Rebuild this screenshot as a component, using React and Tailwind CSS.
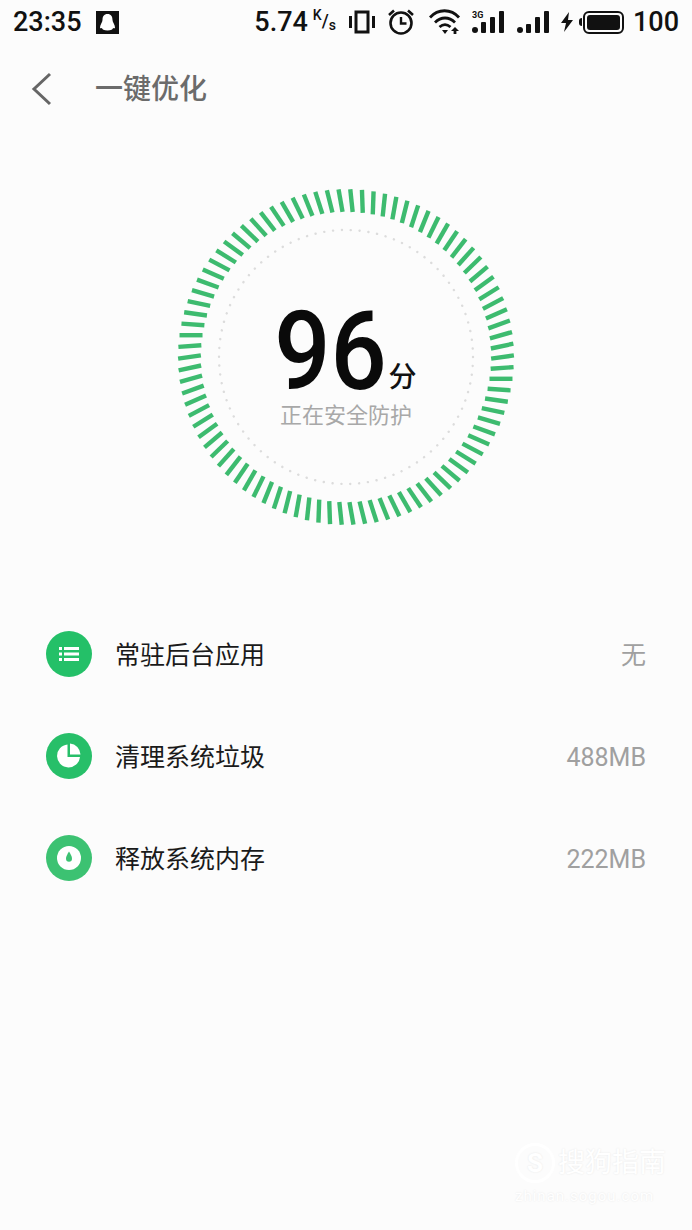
import React from 'react';

const CJK = { fontFamily: 'Roboto, "Noto Sans CJK SC", sans-serif' };

function range(n) {
  return Array.from({ length: n }, (_, i) => i);
}

function Ring() {
  const count = 90;
  return (
    <svg width="340" height="340" viewBox="-170 -170 340 340" className="block">
      <circle r="127" fill="none" stroke="#dcdcdc" strokeWidth="2.400" strokeLinecap="round" strokeDasharray="0.1 8.767" />
      {/* ticks lean 8deg off the radius */}
      {range(count).map((i) => (
        <line
          key={i}
          x1="0"
          y1="-11.500"
          x2="0"
          y2="11.500"
          stroke="#3dbb6f"
          strokeWidth="4.400"
          transform={`rotate(${i * 4 + 2}) translate(0 -156.500) rotate(-8)`}
        />
      ))}
    </svg>
  );
}

function StatusIcons() {
  return (
    <>
      <svg width="26" height="24" viewBox="0 0 26 24" className="ml-[13px]">
        <path d="M7 2h12v20H7z" fill="none" stroke="#111" strokeWidth="3" />
        <path d="M1.500 6v12M24.500 6v12" stroke="#111" strokeWidth="3" />
      </svg>
      <svg width="28" height="28" viewBox="0 0 28 28" className="ml-[12px]">
        <circle cx="14" cy="15" r="10.500" fill="none" stroke="#111" strokeWidth="2.600" />
        <path d="M14 9v6.500h5.500" fill="none" stroke="#111" strokeWidth="2.400" />
        <path d="M2 7l5-4.500M26 7l-5-4.500" stroke="#111" strokeWidth="2.600" />
      </svg>
      <svg width="32" height="26" viewBox="0 0 32 26" className="ml-[14px]">
        <path d="M1 8.500C9-.5 22-.5 30 8.500" fill="none" stroke="#111" strokeWidth="2.800" />
        <path d="M6 13.500c6-6 14-6 20 0" fill="none" stroke="#111" strokeWidth="2.800" />
        <path d="M10.500 18c3.500-3 7.500-3 11 0" fill="none" stroke="#111" strokeWidth="2.800" />
        <path d="M13 21h6l-3 4z" fill="#111" />
        <path d="M26 18l4 4h-2.600v3h-2.800v-3H22z" fill="#111" />
      </svg>
      <svg width="32" height="24" viewBox="0 0 32 24" className="ml-[11px]">
        <text x="0" y="8" fontSize="9" fontWeight="700" fontFamily="Roboto, sans-serif" fill="#111">3G</text>
        <circle cx="3" cy="20" r="3" fill="#111" />
        <rect x="9" y="12" width="5" height="11" rx="1" fill="#111" />
        <rect x="18" y="7" width="5" height="16" rx="1" fill="#111" />
        <rect x="27" y="1" width="5" height="22" rx="1" fill="#111" />
      </svg>
      <svg width="32" height="24" viewBox="0 0 32 24" className="ml-[13px]">
        <circle cx="3" cy="20" r="3" fill="#111" />
        <rect x="9" y="14" width="5" height="9" rx="1" fill="#111" />
        <rect x="18" y="7" width="5" height="16" rx="1" fill="#111" />
        <rect x="27" y="1" width="5" height="22" rx="1" fill="#111" />
      </svg>
      <svg width="14" height="20" viewBox="0 0 14 20" className="ml-[11px]">
        <path d="M9 0L1 11h5l-2 9 9-12H8z" fill="#111" />
      </svg>
      <div className="ml-[5px] flex items-center">
        <div className="w-[3px] h-[8px] rounded-l-sm bg-[#111]" />
        <div className="w-[41px] h-[23px] rounded-[6px] border-2 border-[#111] p-[2px] ml-[1px]">
          <div className="w-full h-full rounded-[3px] bg-[#111]" />
        </div>
      </div>
    </>
  );
}

function ListGlyph() {
  return (
    <svg width="22" height="16" viewBox="0 0 22 16">
      <rect x="1" y="1" width="3" height="3" fill="#fff" />
      <rect x="1" y="6.500" width="3" height="3" fill="#fff" />
      <rect x="1" y="12" width="3" height="3" fill="#fff" />
      <rect x="6" y="1" width="15" height="3" fill="#fff" />
      <rect x="6" y="6.500" width="15" height="3" fill="#fff" />
      <rect x="6" y="12" width="15" height="3" fill="#fff" />
    </svg>
  );
}

function PieGlyph() {
  return (
    <svg width="26" height="26" viewBox="0 0 26 26">
      <path d="M11.500 1.500A11.500 11.500 0 1 0 24 14H11.500z" fill="#fff" />
      <path d="M14 0.500A11.500 11.500 0 0 1 24.500 11.500H14z" fill="#fff" />
    </svg>
  );
}

function DropGlyph() {
  return (
    <svg width="26" height="26" viewBox="0 0 26 26">
      <circle cx="13" cy="13" r="12" fill="#fff" />
      <path d="M13 6.500c1.800 3 3 5 3 7.200a3 3 0 0 1-6 0c0-2.200 1.200-4.200 3-7.200z" fill="#3cc272" />
    </svg>
  );
}

const rows = [
  { label: '常驻后台应用', value: '无', color: 'bg-[#24c068]', icon: <ListGlyph /> },
  { label: '清理系统垃圾', value: '488MB', color: 'bg-[#27bf69]', icon: <PieGlyph /> },
  { label: '释放系统内存', value: '222MB', color: 'bg-[#3cc272]', icon: <DropGlyph /> },
];

export default function App() {
  return (
    <div className="relative w-[692px] h-[1230px] bg-[#fcfcfc] overflow-hidden" style={CJK}>
      {/* status bar */}
      <div className="flex items-center h-[44px] pl-[13px] pr-[13px] text-[#111]">
        <span className="text-[27px] leading-none font-medium">23:35</span>
        <div className="ml-[14px] w-[23px] h-[23px] bg-[#111] flex items-center justify-center">
          <svg width="17" height="19" viewBox="0 0 17 19">
            <path d="M8.500 1C5 1 3.500 3.500 3.500 7c0 2-2.500 5-2.500 7.500 0 1 1 1 2 .5 0 1.500 2 2.500 5.500 2.500s5.500-1 5.500-2.500c1 .5 2 .5 2-.5C16 12 13.500 9 13.500 7c0-3.500-1.500-6-5-6z" fill="#fff" />
          </svg>
        </div>
        <span className="ml-auto text-[27px] leading-none font-medium">5.74</span>
        <span className="ml-[5px] text-[18px] leading-none font-medium -mt-[3px]">
          <sup className="text-[14px]">K</sup>/<sub className="text-[14px]">s</sub>
        </span>
        <StatusIcons />
        <span className="ml-[9px] text-[27px] leading-none font-medium">100</span>
      </div>

      {/* title bar */}
      <div className="flex items-center h-[90px] pl-[29px]">
        <svg width="24" height="34" viewBox="0 0 24 34">
          <path d="M21 2L5 17l16 15" fill="none" stroke="#666" strokeWidth="3" />
        </svg>
        <h1 className="ml-[42px] mt-[2px] text-[28px] font-medium text-[#6b6b6b]">一键优化</h1>
      </div>

      {/* score ring */}
      <div className="relative w-[340px] h-[340px] mx-auto mt-[53px]">
        <Ring />
        <div className="absolute inset-0 flex flex-col items-center">
          <div className="relative mt-[115px] h-[100px] leading-[100px] text-[110px] font-medium text-[#0a0a0a] pr-[30px]">
            <span className="inline-block scale-x-[0.9]">96</span>
            <span className="absolute left-[120px] bottom-[10px] text-[28px] leading-none text-[#111]">分</span>
          </div>
          <p className="mt-[3px] text-[22px] leading-none text-[#a8a8a8]">正在安全防护</p>
        </div>
      </div>

      {/* items */}
      <div className="mt-[104px] px-[46px] flex flex-col gap-[56px]">
        {rows.map((row) => (
          <div key={row.label} className="flex items-center h-[46px]">
            <div className={`w-[46px] h-[46px] rounded-full flex items-center justify-center ${row.color}`}>
              {row.icon}
            </div>
            <span className="ml-[23px] mt-[4px] text-[25px] text-[#1a1a1a]">{row.label}</span>
            <span className="ml-auto mt-[4px] text-[25px] text-[#a0a0a0]">{row.value}</span>
          </div>
        ))}
      </div>

      {/* watermark */}
      <div className="absolute left-[515px] top-[1143px] w-[160px] text-white [text-shadow:0_0_2px_#e6e6e6]">
        <div className="flex items-center">
          <div className="w-[40px] h-[40px] rounded-full border-[3px] border-white flex items-center justify-center text-[26px] font-bold leading-none">S</div>
          <span className="ml-[3px] text-[27px] leading-none whitespace-nowrap">搜狗指南</span>
        </div>
        <p className="mt-[6px] text-[15px] leading-none whitespace-nowrap tracking-[1px]">zhinan.sogou.com</p>
      </div>
    </div>
  );
}
